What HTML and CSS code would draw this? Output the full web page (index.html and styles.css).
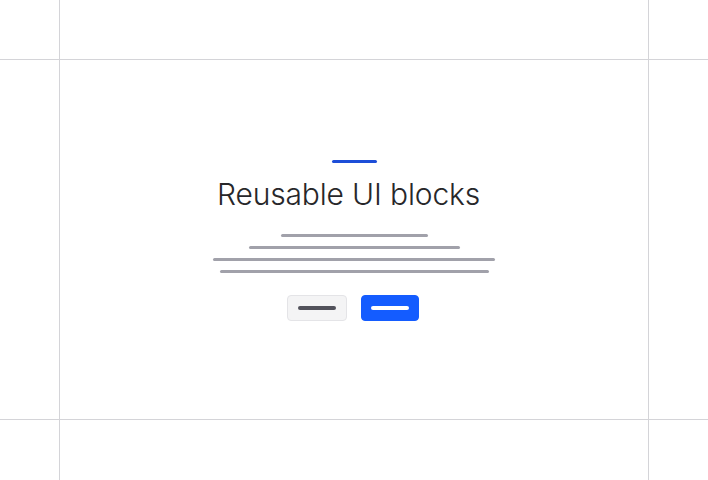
FILE: index.html
```html
<!DOCTYPE html>
<html lang="en">
<head>
<meta charset="utf-8">
<title>Reusable UI blocks</title>
<link rel="stylesheet" href="styles.css">
</head>
<body>
<div class="frame">
  <div class="cell"></div><div class="cell"></div><div class="cell"></div>
  <div class="cell"></div>
  <main class="cell stage">
    <div class="accent"></div>
    <h1 class="title">Reusable UI blocks</h1>
    <div class="lines">
      <span class="line" style="width:147px"></span>
      <span class="line" style="width:211px"></span>
      <span class="line" style="width:282px"></span>
      <span class="line" style="width:269px"></span>
    </div>
    <div class="actions">
      <button class="btn btn-secondary"><span class="btn-label"></span></button>
      <button class="btn btn-primary"><span class="btn-label"></span></button>
    </div>
  </main>
  <div class="cell"></div>
  <div class="cell"></div><div class="cell"></div><div class="cell"></div>
</div>
</body>
</html>
```
FILE: styles.css
```css
html, body {
  margin: 0;
  padding: 0;
  background: #ffffff;
}
body {
  font-family: Inter, "Noto Sans", sans-serif;
}
.frame {
  display: grid;
  grid-template-columns: 59px 588px 59px;
  grid-template-rows: 59px 359px 60px;
  gap: 1px;
  background: #d4d4d8;
  width: 708px;
  height: 480px;
}
.cell {
  background: #ffffff;
}
.stage {
  display: flex;
  flex-direction: column;
  align-items: center;
  padding-top: 100px;
  box-sizing: border-box;
}
.accent {
  width: 45px;
  height: 3px;
  border-radius: 2px;
  background: #1d4ed8;
}
.title {
  margin: 11px 11px 0 0;
  font-size: 30px;
  line-height: 40px;
  font-weight: 300;
  color: #27272a;
  letter-spacing: -0.15px;
}
.lines {
  margin-top: 20px;
  display: flex;
  flex-direction: column;
  align-items: center;
  gap: 9px;
}
.line {
  display: block;
  height: 3px;
  border-radius: 2px;
  background: #a1a1aa;
}
.actions {
  margin: 22px 2px 0 0;
  display: flex;
  gap: 14px;
}
.btn {
  height: 26px;
  padding: 0;
  border-radius: 4px;
  display: flex;
  align-items: center;
  justify-content: center;
  box-sizing: border-box;
}
.btn-secondary {
  width: 60px;
  background: #f4f4f5;
  border: 1px solid #e4e4e7;
}
.btn-primary {
  width: 58px;
  background: #145cff;
  border: 1px solid #145cff;
}
.btn-label {
  display: block;
  width: 38px;
  height: 4px;
  border-radius: 2px;
}
.btn-secondary .btn-label {
  background: #52525b;
}
.btn-primary .btn-label {
  background: #ffffff;
}
```
